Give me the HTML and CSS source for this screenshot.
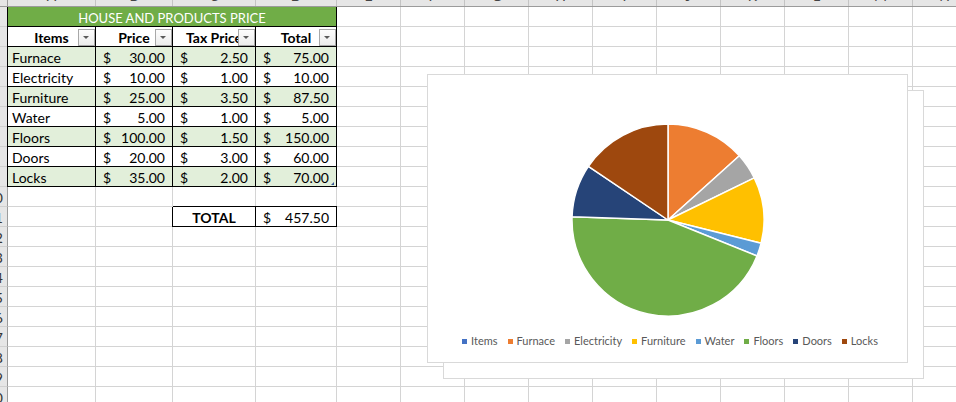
FILE: index.html
```html
<!doctype html>
<html lang="en">
<head>
  <title>House and products price</title>
  <link rel="stylesheet" href="styles.css">
</head>
<body>
  <div class="sheet">
    <div class="rowheads">
      <div class="corner"></div>
      <div class="rh"></div>
      <div class="rh"></div>
      <div class="rh"></div>
      <div class="rh"></div>
      <div class="rh"></div>
      <div class="rh"></div>
      <div class="rh"></div>
      <div class="rh"></div>
      <div class="rh"></div>
      <div class="rh">10</div>
      <div class="rh">11</div>
      <div class="rh">12</div>
      <div class="rh">13</div>
      <div class="rh">14</div>
      <div class="rh">15</div>
      <div class="rh">16</div>
      <div class="rh">17</div>
      <div class="rh">18</div>
      <div class="rh">19</div>
      <div class="rh">20</div>
    </div>
    <div class="main">
      <div class="colheads">
        <div class="ch"><span>A</span></div>
        <div class="ch"><span>B</span></div>
        <div class="ch"><span>C</span></div>
        <div class="ch"><span>D</span></div>
        <div class="ch"><span>E</span></div>
        <div class="ch"><span>F</span></div>
        <div class="ch"><span>G</span></div>
        <div class="ch"><span>H</span></div>
        <div class="ch"><span>I</span></div>
        <div class="ch"><span>J</span></div>
        <div class="ch"><span>K</span></div>
        <div class="ch"><span>L</span></div>
        <div class="ch"><span>M</span></div>
        <div class="ch"><span>N</span></div>
      </div>
      <div class="body">
        <div class="table">
          <div class="cell title first">HOUSE AND PRODUCTS PRICE</div>

          <div class="cell head first">Items<span class="filter"></span></div>
          <div class="cell head">Price<span class="filter"></span></div>
          <div class="cell head">Tax Price<span class="filter"></span></div>
          <div class="cell head">Total<span class="filter"></span></div>

          <div class="cell item first alt">Furnace</div>
          <div class="cell money alt"><span>$</span><span>30.00</span></div>
          <div class="cell money alt"><span>$</span><span>2.50</span></div>
          <div class="cell money alt"><span>$</span><span>75.00</span></div>

          <div class="cell item first">Electricity</div>
          <div class="cell money"><span>$</span><span>10.00</span></div>
          <div class="cell money"><span>$</span><span>1.00</span></div>
          <div class="cell money"><span>$</span><span>10.00</span></div>

          <div class="cell item first alt">Furniture</div>
          <div class="cell money alt"><span>$</span><span>25.00</span></div>
          <div class="cell money alt"><span>$</span><span>3.50</span></div>
          <div class="cell money alt"><span>$</span><span>87.50</span></div>

          <div class="cell item first">Water</div>
          <div class="cell money"><span>$</span><span>5.00</span></div>
          <div class="cell money"><span>$</span><span>1.00</span></div>
          <div class="cell money"><span>$</span><span>5.00</span></div>

          <div class="cell item first alt">Floors</div>
          <div class="cell money alt"><span>$</span><span>100.00</span></div>
          <div class="cell money alt"><span>$</span><span>1.50</span></div>
          <div class="cell money alt"><span>$</span><span>150.00</span></div>

          <div class="cell item first">Doors</div>
          <div class="cell money"><span>$</span><span>20.00</span></div>
          <div class="cell money"><span>$</span><span>3.00</span></div>
          <div class="cell money"><span>$</span><span>60.00</span></div>

          <div class="cell item first alt">Locks</div>
          <div class="cell money alt"><span>$</span><span>35.00</span></div>
          <div class="cell money alt"><span>$</span><span>2.00</span></div>
          <div class="cell money alt last"><span>$</span><span>70.00</span><i class="handle"></i></div>

          <div class="blank"></div>
          <div class="blank"></div>
          <div class="blank over-total"></div>
          <div class="blank over-total"></div>

          <div class="blank"></div>
          <div class="blank"></div>
          <div class="cell total-label">TOTAL</div>
          <div class="cell money"><span>$</span><span>457.50</span></div>
        </div>

        <div class="chart chart-back"></div>
        <div class="chart chart-front">
          <svg class="pie" width="200" height="200" viewBox="-100 -100 200 200">
            <path fill="#ed7d31" d="M0,0 L0,-96 A96,96 0 0 1 71.34,-64.24 Z"/>
            <path fill="#a5a5a5" d="M0,0 L71.34,-64.24 A96,96 0 0 1 86.28,-42.08 Z"/>
            <path fill="#ffc000" d="M0,0 L86.28,-42.08 A96,96 0 0 1 93.15,23.23 Z"/>
            <path fill="#5b9bd5" d="M0,0 L93.15,23.23 A96,96 0 0 1 89.01,35.96 Z"/>
            <path fill="#70ad47" d="M0,0 L89.01,35.96 A96,96 0 0 1 -95.94,-3.35 Z"/>
            <path fill="#264478" d="M0,0 L-95.94,-3.35 A96,96 0 0 1 -79.59,-53.68 Z"/>
            <path fill="#9e480e" d="M0,0 L-79.59,-53.68 A96,96 0 0 1 0,-96 Z"/>
          </svg>
          <ul class="legend">
            <li><i class="key k-items"></i>Items</li>
            <li><i class="key k-furnace"></i>Furnace</li>
            <li><i class="key k-electricity"></i>Electricity</li>
            <li><i class="key k-furniture"></i>Furniture</li>
            <li><i class="key k-water"></i>Water</li>
            <li><i class="key k-floors"></i>Floors</li>
            <li><i class="key k-doors"></i>Doors</li>
            <li><i class="key k-locks"></i>Locks</li>
          </ul>
        </div>
      </div>
    </div>
  </div>
</body>
</html>
```

FILE: styles.css
```css
html, body {
  margin: 0;
  padding: 0;
  background: #fff;
  height: 100%;
  overflow: hidden;
}
body {
  font-family: Lato, "Liberation Sans", sans-serif;
  font-size: 14px;
  color: #000;
}
.sheet {
  display: flex;
  flex-flow: row nowrap;
  width: 977px;
}
.rowheads {
  flex: none;
  width: 8px;
  display: flex;
  flex-flow: column nowrap;
}
.corner {
  box-sizing: border-box;
  height: 7px;
  background: #e6e6e6;
  border-right: 1px solid #9b9b9b;
  border-bottom: 1px solid #9b9b9b;
}
.rh {
  box-sizing: border-box;
  height: 20px;
  display: flex;
  justify-content: flex-end;
  overflow: hidden;
  white-space: nowrap;
  padding: 2px 4px 0 0;
  line-height: 17px;
  background: #e6e6e6;
  color: #333;
  border-right: 1px solid #9b9b9b;
  border-bottom: 1px solid #d0d0d0;
}
.main {
  flex: none;
  width: 969px;
  display: flex;
  flex-flow: column nowrap;
}
.colheads {
  box-sizing: border-box;
  height: 7px;
  display: grid;
  grid-template-columns: 88px 77px 83px 81px repeat(10, 64px);
  background: #e6e6e6;
  border-bottom: 1px solid #9b9b9b;
}
.ch {
  display: flex;
  justify-content: center;
  align-items: flex-end;
  overflow: hidden;
  border-right: 1px solid #c4c4c4;
  color: #444;
}
.ch span {
  line-height: 14px;
  margin-bottom: 3px;
}
.body {
  position: relative;
  height: 400px;
  background:
    linear-gradient(#d4d4d4, #d4d4d4) 87px 0 / 1px 100% no-repeat,
    linear-gradient(#d4d4d4, #d4d4d4) 164px 0 / 1px 100% no-repeat,
    linear-gradient(#d4d4d4, #d4d4d4) 247px 0 / 1px 100% no-repeat,
    linear-gradient(#d4d4d4, #d4d4d4) 328px 0 / 1px 100% no-repeat,
    repeating-linear-gradient(to right, transparent 0 63px, #d4d4d4 63px 64px) 329px 0 / 640px 100% no-repeat,
    repeating-linear-gradient(to bottom, transparent 0 19px, #d4d4d4 19px 20px),
    #fff;
}

/* table */
.table {
  display: grid;
  grid-template-columns: 88px 77px 83px 81px;
  grid-auto-rows: 20px;
  width: 329px;
}
.cell {
  box-sizing: border-box;
  position: relative;
  display: flex;
  align-items: flex-start;
  padding-top: 2px;
  line-height: 17px;
  white-space: nowrap;
  background: #fff;
  border-right: 1px solid #000;
  border-bottom: 1px solid #000;
}
.cell.first {
  box-shadow: -1px 0 0 #000;
}
.cell.alt {
  background: #e2efda;
}
.title {
  grid-column: 1 / 5;
  justify-content: center;
  background: #70ad47;
  color: #fff;
  font-size: 13px;
  padding-top: 3px;
}
.head {
  justify-content: center;
  font-weight: bold;
  overflow: hidden;
}
.filter {
  position: absolute;
  right: 0;
  bottom: 0;
  box-sizing: border-box;
  width: 17px;
  height: 17px;
  border: 1px solid #a8a8a8;
  background: linear-gradient(#fdfdfd, #ececec);
}
.filter::after {
  content: "";
  position: absolute;
  left: 4px;
  top: 6px;
  border-left: 3.5px solid transparent;
  border-right: 3.5px solid transparent;
  border-top: 3.5px solid #5a5a5a;
}
.item {
  padding-left: 4px;
}
.money {
  justify-content: space-between;
  padding-left: 7px;
  padding-right: 7px;
}
.handle {
  position: absolute;
  right: 2px;
  bottom: 1px;
  width: 0;
  height: 0;
  border-left: 3px solid transparent;
  border-bottom: 3px solid #3b5998;
}
.blank {
  box-sizing: border-box;
}
.over-total {
  border-bottom: 1px solid #000;
}
.total-label {
  justify-content: center;
  font-weight: bold;
  box-shadow: -1px 0 0 #000;
}

/* chart */
.chart {
  position: absolute;
  box-sizing: border-box;
  width: 481px;
  height: 289px;
  background: #fff;
  border: 1px solid #d9d9d9;
}
.chart-back {
  left: 435px;
  top: 83px;
}
.chart-front {
  left: 419px;
  top: 67px;
  display: flex;
  flex-flow: column nowrap;
  align-items: center;
  padding-top: 45px;
}
.pie {
  display: block;
  flex: none;
}
.pie path {
  stroke: #fff;
  stroke-width: 1.5;
  stroke-linejoin: round;
}
.legend {
  list-style-type: none;
  margin: 14px 0 0 5px;
  padding: 0;
  display: flex;
  flex-flow: row nowrap;
  gap: 10px;
  font-size: 11px;
  line-height: 14px;
  color: #595959;
}
.legend li {
  display: flex;
  align-items: center;
  gap: 4px;
}
.key {
  display: block;
  width: 5px;
  height: 5px;
}
.k-items { background: #4472c4; }
.k-furnace { background: #ed7d31; }
.k-electricity { background: #a5a5a5; }
.k-furniture { background: #ffc000; }
.k-water { background: #5b9bd5; }
.k-floors { background: #70ad47; }
.k-doors { background: #264478; }
.k-locks { background: #9e480e; }
```
